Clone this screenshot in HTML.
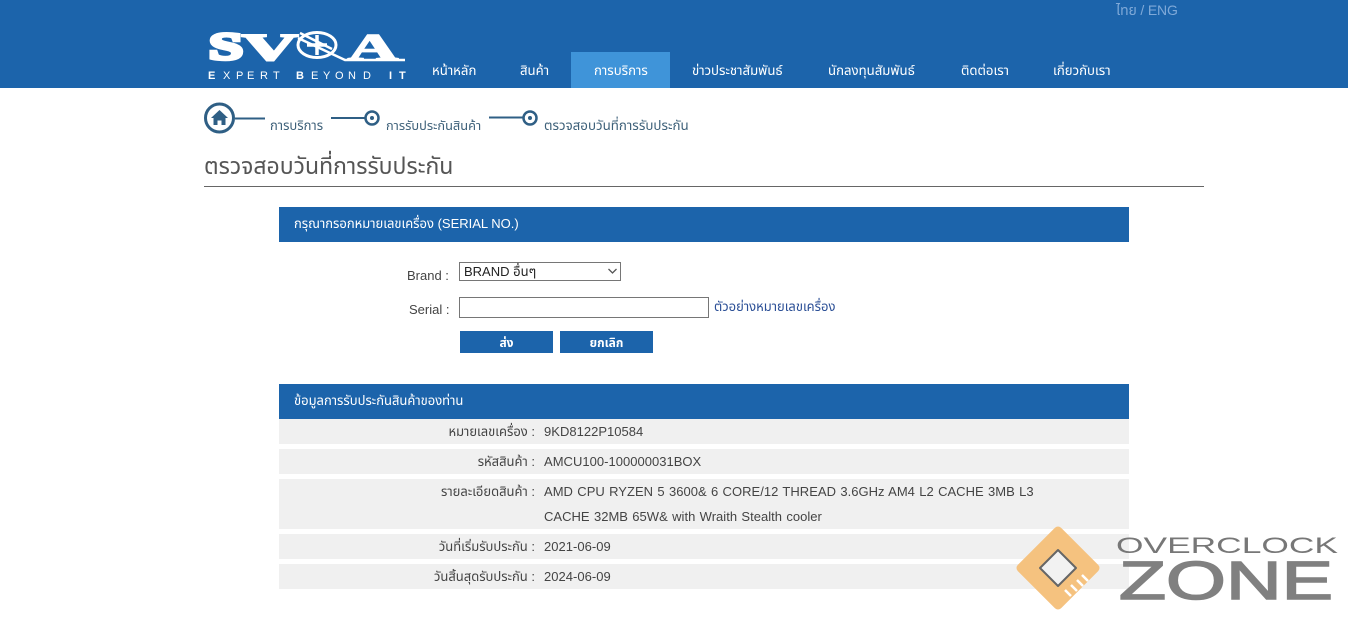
<!DOCTYPE html>
<html lang="th"><head><meta charset="utf-8"><title>ตรวจสอบวันที่การรับประกัน</title>
<style>
html,body{margin:0;padding:0;background:#fff;width:1348px;height:620px;overflow:hidden}
body{font-family:"Liberation Sans","Noto Sans Thai","Noto Sans CJK SC",sans-serif;font-size:13px;color:#444;position:relative}
div,a,span{position:absolute;white-space:nowrap}
.nav{top:62px;color:#fff;font-size:13.2px;line-height:18px}
.crumb{color:#3d6079;font-size:13px;top:117px;line-height:18px}
.bar{left:279px;width:850px;height:35px;background:#1c64ab;color:#fff;font-size:13px;line-height:34px;text-indent:15px}
.row{left:279px;width:850px;background:#f0f0f0}
.lb{left:279px;width:256px;text-align:right;color:#444;line-height:18px}
.v{left:544px;color:#444;line-height:18px;word-spacing:.7px;letter-spacing:.02px}
.btn{top:331px;width:93px;height:22px;background:#1c64ab;color:#fff;text-align:center;font-size:12px;font-weight:bold;line-height:24px}
</style></head><body>
<div style="left:0;top:0;width:1348px;height:88px;background:#1c64ab"></div>
<div style="left:1116px;top:1px;color:#7fa9d8;font-size:14px;line-height:18px;letter-spacing:-.15px">ไทย / ENG</div>

<svg style="position:absolute;left:200px;top:25px" width="210" height="60" viewBox="0 0 210 60">
<g font-family="Liberation Serif" font-weight="bold" font-size="38" fill="#fff" stroke="#fff">
<text x="9" y="34" textLength="34" lengthAdjust="spacingAndGlyphs" stroke-width="3.500">S</text>
<text x="42" y="35" textLength="56" lengthAdjust="spacingAndGlyphs" stroke-width="2">V</text>
<text x="148" y="35" textLength="50" lengthAdjust="spacingAndGlyphs" stroke-width="1.600">A</text>
</g>
<ellipse cx="117" cy="20" rx="19" ry="12.500" fill="#1c64ab" stroke="#fff" stroke-width="3"/>
<path d="M117 10V30M107 20H127" stroke="#fff" stroke-width="3.500"/>
<path d="M98 13L145 35H205" fill="none" stroke="#fff" stroke-width="2.500"/>
<path d="M100 8L132 24" fill="none" stroke="#fff" stroke-width="2.500"/>
<g font-family="Liberation Sans" font-size="11" fill="#fff">
<text x="8 23 36 47 60 73" y="54"><tspan font-weight="bold">E</tspan>XPERT</text>
<text x="96 111 123 135 148 163" y="54"><tspan font-weight="bold">B</tspan>EYOND</text>
<text x="189 199" y="54" font-weight="bold">IT</text>
</g>
</svg>

<div style="left:571px;top:52px;width:99px;height:36px;background:#3f94d9"></div>
<div class="nav" style="left:432px">หน้าหลัก</div>
<div class="nav" style="left:520px">สินค้า</div>
<div class="nav" style="left:594px">การบริการ</div>
<div class="nav" style="left:692px">ข่าวประชาสัมพันธ์</div>
<div class="nav" style="left:828px">นักลงทุนสัมพันธ์</div>
<div class="nav" style="left:961px">ติดต่อเรา</div>
<div class="nav" style="left:1053px">เกี่ยวกับเรา</div>

<svg style="position:absolute;left:200px;top:95px" width="360" height="45" viewBox="0 0 360 45">
<circle cx="19.500" cy="23" r="14" fill="#fff" stroke="#2f5f85" stroke-width="3"/>
<path d="M19.500 15L11 23H13.500V30H17.500V25.500H21.500V30H25.500V23H28Z" fill="#2f5f85"/>
<path d="M35 23.500H65M131 23H172M289 22.500H331" stroke="#2f5f85" stroke-width="2"/>
<circle cx="172" cy="23" r="6.500" fill="#fff" stroke="#2f5f85" stroke-width="2.500"/><circle cx="172" cy="23" r="2" fill="#2f5f85"/>
<circle cx="330" cy="23" r="6.500" fill="#fff" stroke="#2f5f85" stroke-width="2.500"/><circle cx="330" cy="23" r="2" fill="#2f5f85"/>
</svg>
<div class="crumb" style="left:270px">การบริการ</div>
<div class="crumb" style="left:386px;font-size:12.8px">การรับประกันสินค้า</div>
<div class="crumb" style="left:544px;font-size:13.35px">ตรวจสอบวันที่การรับประกัน</div>

<div style="left:204px;top:150px;color:#555;font-size:23px;line-height:32px">ตรวจสอบวันที่การรับประกัน</div>
<div style="left:204px;top:186px;width:1000px;height:1px;background:#666"></div>

<div class="bar" style="top:207px">กรุณากรอกหมายเลขเครื่อง (SERIAL NO.)</div>
<div style="left:407px;top:267px;line-height:18px;color:#444">Brand :</div>
<div style="left:409px;top:301px;line-height:18px;color:#444">Serial :</div>
<div style="left:459px;top:262px;width:160px;height:17px;border:1px solid #767676;background:#fff;color:#222;line-height:18px;text-indent:4px">BRAND อื่นๆ</div>
<svg style="position:absolute;left:607px;top:268px" width="11" height="7"><path d="M1.500 1L5.500 5L9.500 1" fill="none" stroke="#555" stroke-width="1.300"/></svg>
<div style="left:459px;top:297px;width:248px;height:19px;border:1px solid #767676;background:#fff"></div>
<div style="left:714px;top:298px;color:#2b4f96;font-size:13px;line-height:18px">ตัวอย่างหมายเลขเครื่อง</div>
<div class="btn" style="left:460px">ส่ง</div>
<div class="btn" style="left:560px">ยกเลิก</div>

<div class="bar" style="top:384px">ข้อมูลการรับประกันสินค้าของท่าน</div>
<div class="row" style="top:419px;height:25px"></div>
<div class="row" style="top:449px;height:25px"></div>
<div class="row" style="top:479px;height:50px"></div>
<div class="row" style="top:534px;height:25px"></div>
<div class="row" style="top:564px;height:25px"></div>
<div class="lb" style="top:423px">หมายเลขเครื่อง :</div><div class="v" style="top:423px">9KD8122P10584</div>
<div class="lb" style="top:453px">รหัสสินค้า :</div><div class="v" style="top:453px">AMCU100-100000031BOX</div>
<div class="lb" style="top:483px">รายละเอียดสินค้า :</div><div class="v" style="top:483px">AMD CPU RYZEN 5 3600&amp; 6 CORE/12 THREAD 3.6GHz AM4 L2 CACHE 3MB L3</div>
<div class="v" style="top:508px">CACHE 32MB 65W&amp; with Wraith Stealth cooler</div>
<div class="lb" style="top:538px">วันที่เริ่มรับประกัน :</div><div class="v" style="top:538px">2021-06-09</div>
<div class="lb" style="top:568px">วันสิ้นสุดรับประกัน :</div><div class="v" style="top:568px">2024-06-09</div>

<svg style="position:absolute;left:1010px;top:520px" width="338" height="100" viewBox="0 0 338 100">
<path d="M48 11L85 48L48 85L11 48Z" fill="#f5c27f" stroke="#f5c27f" stroke-width="9" stroke-linejoin="round"/>
<path d="M48 30L66 48L48 66L30 48Z" fill="#f2f2f2" stroke="#666" stroke-width="2" stroke-linejoin="round"/>
<path d="M55 70l6 6M61 65l6 6M67 60l6 6M72 55l6 6" stroke="#fff" stroke-width="2.500"/>
<text x="106" y="33" font-family="Liberation Sans" font-size="22" fill="#777" textLength="222" lengthAdjust="spacingAndGlyphs">OVERCLOCK</text>
<text x="109" y="79" font-family="Liberation Sans" font-size="54" fill="#808080" stroke="#808080" stroke-width="1.500" textLength="214" lengthAdjust="spacingAndGlyphs">ZONE</text>
</svg>
</body></html>
